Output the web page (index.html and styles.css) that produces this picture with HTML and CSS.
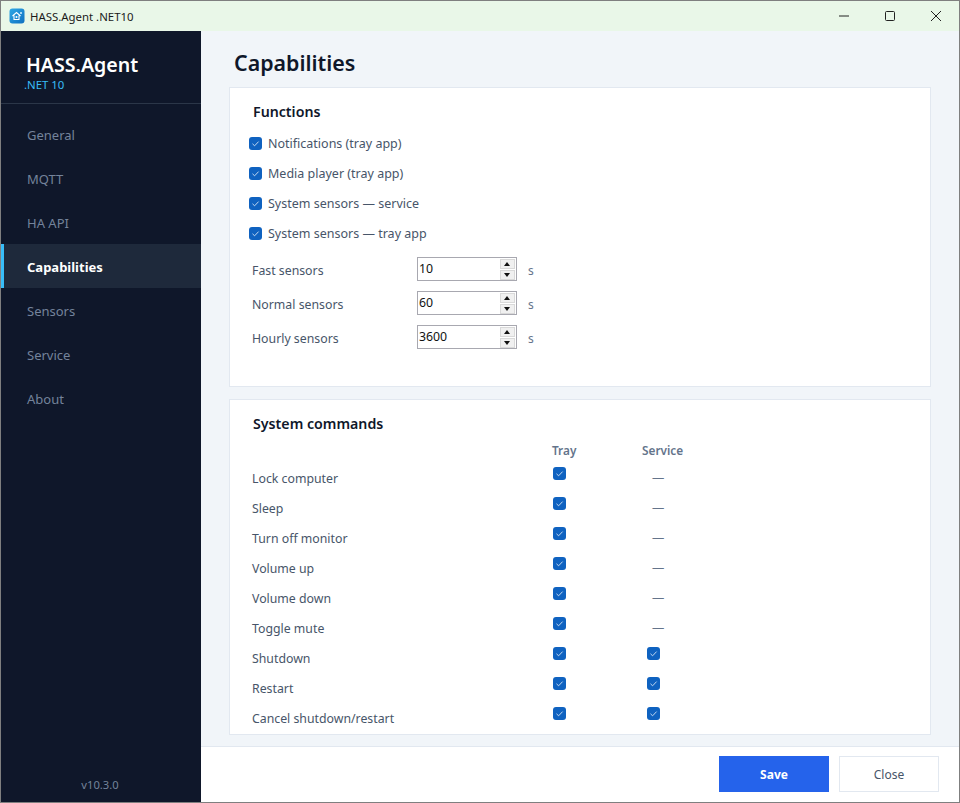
FILE: index.html
```html
<!DOCTYPE html>
<html lang="en">
<head>
    <meta charset="UTF-8">
    <title>HASS.Agent .NET10</title>
    <link rel="stylesheet" href="styles.css">
</head>
<body>
    <div class="window">
        <div class="titlebar">
            <svg class="app-icon" viewBox="0 0 16 16" width="16" height="16">
                <defs>
                    <linearGradient id="icon-bg" x1="0" y1="0" x2="1" y2="1">
                        <stop offset="0" stop-color="#2fa8e6"/>
                        <stop offset="1" stop-color="#0f6fc0"/>
                    </linearGradient>
                </defs>
                <rect width="15" height="15" x="0.5" y="0.5" rx="3" fill="url(#icon-bg)"/>
                <path d="M3.5 8 L7.5 4.5 L11.5 8 M5 7.5 V11.5 H10 V7.5" fill="none" stroke="#fff" stroke-width="1.1"/>
                <circle cx="7.5" cy="9" r="1" fill="#fff"/>
                <circle cx="12" cy="5" r="1" fill="#d6f0ff"/>
            </svg>
            <span class="app-title">HASS.Agent .NET10</span>
            <div class="win-controls">
                <span class="win-btn"><svg width="12" height="12" viewBox="0 0 12 12"><path d="M1 6 H11" stroke="#222" stroke-width="1"/></svg></span>
                <span class="win-btn"><svg width="12" height="12" viewBox="0 0 12 12"><rect x="1.5" y="1.5" width="9" height="9" rx="1" fill="none" stroke="#222" stroke-width="1"/></svg></span>
                <span class="win-btn"><svg width="12" height="12" viewBox="0 0 12 12"><path d="M1 1 L11 11 M11 1 L1 11" stroke="#222" stroke-width="1"/></svg></span>
            </div>
        </div>
        <div class="app">
            <aside class="sidebar">
                <div class="brand">
                    <div class="brand-name">HASS.Agent</div>
                    <div class="brand-sub">.NET 10</div>
                </div>
                <nav class="nav">
                    <div class="nav-item">General</div>
                    <div class="nav-item">MQTT</div>
                    <div class="nav-item">HA API</div>
                    <div class="nav-item active">Capabilities</div>
                    <div class="nav-item">Sensors</div>
                    <div class="nav-item">Service</div>
                    <div class="nav-item">About</div>
                </nav>
                <div class="version">v10.3.0</div>
            </aside>
            <main class="main">
                <div class="content">
                    <h1 class="page-title">Capabilities</h1>
                    <section class="card card-functions">
                        <h2>Functions</h2>
                        <label class="check-row"><span class="check"><svg viewBox="0 0 13 13"><path d="M3.5 6.8 L5.6 8.8 L9.6 4.6"/></svg></span>Notifications (tray app)</label>
                        <label class="check-row"><span class="check"><svg viewBox="0 0 13 13"><path d="M3.5 6.8 L5.6 8.8 L9.6 4.6"/></svg></span>Media player (tray app)</label>
                        <label class="check-row"><span class="check"><svg viewBox="0 0 13 13"><path d="M3.5 6.8 L5.6 8.8 L9.6 4.6"/></svg></span>System sensors — service</label>
                        <label class="check-row"><span class="check"><svg viewBox="0 0 13 13"><path d="M3.5 6.8 L5.6 8.8 L9.6 4.6"/></svg></span>System sensors — tray app</label>
                        <div class="interval-rows">
                            <div class="interval">
                                <span class="interval-label">Fast sensors</span>
                                <div class="spin"><span class="spin-value">10</span><span class="spin-btns"><i class="up"></i><i class="down"></i></span></div>
                                <span class="unit">s</span>
                            </div>
                            <div class="interval">
                                <span class="interval-label">Normal sensors</span>
                                <div class="spin"><span class="spin-value">60</span><span class="spin-btns"><i class="up"></i><i class="down"></i></span></div>
                                <span class="unit">s</span>
                            </div>
                            <div class="interval">
                                <span class="interval-label">Hourly sensors</span>
                                <div class="spin"><span class="spin-value">3600</span><span class="spin-btns"><i class="up"></i><i class="down"></i></span></div>
                                <span class="unit">s</span>
                            </div>
                        </div>
                    </section>
                    <section class="card card-commands">
                        <h2>System commands</h2>
                        <div class="cmd-grid">
                            <div class="cmd-head cmd-tray">Tray</div>
                            <div class="cmd-head cmd-service">Service</div>
                        </div>
                        <div class="cmd-grid cmd-row">
                            <span class="cmd-name">Lock computer</span>
                            <span class="cmd-tray"><span class="check"><svg viewBox="0 0 13 13"><path d="M3.5 6.8 L5.6 8.8 L9.6 4.6"/></svg></span></span>
                            <span class="cmd-service dash">—</span>
                        </div>
                        <div class="cmd-grid cmd-row">
                            <span class="cmd-name">Sleep</span>
                            <span class="cmd-tray"><span class="check"><svg viewBox="0 0 13 13"><path d="M3.5 6.8 L5.6 8.8 L9.6 4.6"/></svg></span></span>
                            <span class="cmd-service dash">—</span>
                        </div>
                        <div class="cmd-grid cmd-row">
                            <span class="cmd-name">Turn off monitor</span>
                            <span class="cmd-tray"><span class="check"><svg viewBox="0 0 13 13"><path d="M3.5 6.8 L5.6 8.8 L9.6 4.6"/></svg></span></span>
                            <span class="cmd-service dash">—</span>
                        </div>
                        <div class="cmd-grid cmd-row">
                            <span class="cmd-name">Volume up</span>
                            <span class="cmd-tray"><span class="check"><svg viewBox="0 0 13 13"><path d="M3.5 6.8 L5.6 8.8 L9.6 4.6"/></svg></span></span>
                            <span class="cmd-service dash">—</span>
                        </div>
                        <div class="cmd-grid cmd-row">
                            <span class="cmd-name">Volume down</span>
                            <span class="cmd-tray"><span class="check"><svg viewBox="0 0 13 13"><path d="M3.5 6.8 L5.6 8.8 L9.6 4.6"/></svg></span></span>
                            <span class="cmd-service dash">—</span>
                        </div>
                        <div class="cmd-grid cmd-row">
                            <span class="cmd-name">Toggle mute</span>
                            <span class="cmd-tray"><span class="check"><svg viewBox="0 0 13 13"><path d="M3.5 6.8 L5.6 8.8 L9.6 4.6"/></svg></span></span>
                            <span class="cmd-service dash">—</span>
                        </div>
                        <div class="cmd-grid cmd-row">
                            <span class="cmd-name">Shutdown</span>
                            <span class="cmd-tray"><span class="check"><svg viewBox="0 0 13 13"><path d="M3.5 6.8 L5.6 8.8 L9.6 4.6"/></svg></span></span>
                            <span class="cmd-service"><span class="check"><svg viewBox="0 0 13 13"><path d="M3.5 6.8 L5.6 8.8 L9.6 4.6"/></svg></span></span>
                        </div>
                        <div class="cmd-grid cmd-row">
                            <span class="cmd-name">Restart</span>
                            <span class="cmd-tray"><span class="check"><svg viewBox="0 0 13 13"><path d="M3.5 6.8 L5.6 8.8 L9.6 4.6"/></svg></span></span>
                            <span class="cmd-service"><span class="check"><svg viewBox="0 0 13 13"><path d="M3.5 6.8 L5.6 8.8 L9.6 4.6"/></svg></span></span>
                        </div>
                        <div class="cmd-grid cmd-row">
                            <span class="cmd-name">Cancel shutdown/restart</span>
                            <span class="cmd-tray"><span class="check"><svg viewBox="0 0 13 13"><path d="M3.5 6.8 L5.6 8.8 L9.6 4.6"/></svg></span></span>
                            <span class="cmd-service"><span class="check"><svg viewBox="0 0 13 13"><path d="M3.5 6.8 L5.6 8.8 L9.6 4.6"/></svg></span></span>
                        </div>
                    </section>
                </div>
                <footer class="footer">
                    <button class="btn btn-save">Save</button>
                    <button class="btn btn-close">Close</button>
                </footer>
            </main>
        </div>
    </div>
</body>
</html>
```

FILE: styles.css
```css
* {
    margin: 0;
    padding: 0;
    box-sizing: border-box;
}

html, body {
    width: 960px;
    height: 803px;
    overflow: hidden;
}

body {
    font-family: "Noto Sans", "Open Sans", sans-serif;
    font-size: 12.3px;
    color: #334155;
}

.window {
    width: 960px;
    height: 803px;
    border: 1px solid #7f7f7f;
    display: flex;
    flex-direction: column;
    background-color: #f1f5f9;
}

/* Title bar */
.titlebar {
    height: 30px;
    flex-shrink: 0;
    display: flex;
    align-items: center;
    padding-left: 8px;
    background-color: #e9f7e8;
}

.app-icon {
    margin-right: 5px;
}

.app-title {
    font-size: 11.4px;
    color: #1a1a1a;
}

.win-controls {
    margin-left: auto;
    display: flex;
}

.win-btn {
    width: 46px;
    height: 30px;
    display: flex;
    align-items: center;
    justify-content: center;
}

.app {
    flex: 1;
    display: flex;
    min-height: 0;
}

/* Sidebar */
.sidebar {
    width: 200px;
    flex-shrink: 0;
    display: flex;
    flex-direction: column;
    background-color: #0f172a;
}

.brand {
    height: 73px;
    padding: 21px 0 0 25px;
    border-bottom: 1px solid #2b3648;
}

.brand-name {
    font-size: 19.6px;
    font-weight: 600;
    line-height: 26px;
    color: #fff;
}

.brand-sub {
    font-size: 11.4px;
    line-height: 13px;
    margin-left: -2px;
    color: #38bdf8;
}

.nav {
    padding-top: 8px;
}

.nav-item {
    height: 44px;
    line-height: 46px;
    padding-left: 26px;
    font-size: 13px;
    color: #74839b;
}

.nav-item.active {
    padding-left: 23px;
    border-left: 3px solid #38bdf8;
    background-color: #1e293b;
    color: #fff;
    font-weight: 700;
}

.version {
    margin-top: auto;
    padding: 0 2px 10px 0;
    text-align: center;
    font-size: 11.2px;
    color: #74839b;
}

/* Main */
.main {
    flex: 1;
    min-width: 0;
    display: flex;
    flex-direction: column;
}

.content {
    flex: 1;
    min-height: 0;
    overflow: hidden;
    padding: 0 28px 0 28px;
}

.page-title {
    font-size: 21.4px;
    font-weight: 600;
    line-height: 30px;
    margin: 17px 0 9px 5px;
    color: #0f172a;
}

.card {
    background-color: white;
    border: 1px solid #e2e8f0;
    margin-bottom: 12px;
    padding-left: 22px;
}

.card h2 {
    font-size: 14.2px;
    font-weight: 600;
    color: #0f172a;
    line-height: 20px;
    margin-left: 1px;
}

.card-functions {
    height: 300px;
    padding-top: 14px;
}

.card-commands {
    height: 336px;
    padding-top: 14px;
}

.check {
    display: inline-block;
    width: 13px;
    height: 13px;
    border-radius: 3px;
    background-color: #0f62c0;
    flex-shrink: 0;
}

.check svg {
    display: block;
    width: 13px;
    height: 13px;
    fill: none;
    stroke: #d5e4f5;
    stroke-width: 0.9;
}

.check-row {
    display: flex;
    align-items: center;
    height: 30px;
    gap: 6px;
    margin-left: -3px;
    font-size: 12.5px;
    color: #475569;
}

.card-functions h2 {
    margin-bottom: 6px;
}

.interval-rows {
    margin-top: 4px;
}

.interval {
    display: flex;
    align-items: center;
    height: 34px;
}

.interval-label {
    width: 165px;
    color: #475569;
    padding-top: 2px;
}

.spin {
    width: 100px;
    height: 24px;
    border: 1px solid #a8a8b0;
    display: flex;
    align-items: center;
    justify-content: space-between;
    padding: 0 1px;
    color: #111;
}

.spin-value {
    padding-bottom: 2px;
}

.spin-btns {
    width: 15px;
    display: flex;
    flex-direction: column;
    gap: 1px;
}

.spin-btns i {
    height: 10px;
    background-color: #f0f0f0;
    border: 1px solid #d9d9d9;
    position: relative;
}

.spin-btns i::after {
    content: '';
    position: absolute;
    left: 3px;
    width: 0;
    height: 0;
    border-left: 3.5px solid transparent;
    border-right: 3.5px solid transparent;
}

.spin-btns .up::after {
    top: 2px;
    border-bottom: 4px solid #111;
}

.spin-btns .down::after {
    top: 2px;
    border-top: 4px solid #111;
}

.unit {
    margin-left: 11px;
    padding-top: 3px;
    font-size: 12px;
    color: #64748b;
}

/* Commands table */
.cmd-grid {
    display: grid;
    grid-template-columns: 299px 94px 60px;
}

.cmd-head {
    font-size: 11.8px;
    font-weight: 600;
    color: #64748b;
    line-height: 18px;
    margin-top: 7px;
    padding-bottom: 4px;
}

.cmd-tray {
    grid-column: 2;
    text-align: left;
}

.cmd-service {
    grid-column: 3;
}

.cmd-head.cmd-tray {
    padding-left: 1px;
}

.cmd-head.cmd-service {
    margin-left: -3px;
}

.cmd-row {
    height: 30px;
    align-items: start;
    color: #475569;
}

.cmd-name {
    line-height: 32px;
}

.cmd-row .check {
    margin-top: 4px;
    margin-left: 2px;
}

.dash {
    line-height: 30px;
    padding-left: 7px;
    color: #64748b;
}

/* Footer */
.footer {
    height: 56px;
    flex-shrink: 0;
    display: flex;
    justify-content: flex-end;
    gap: 10px;
    padding: 9px 20px 0 0;
    background-color: white;
    border-top: 1px solid #e2e8f0;
}

.btn {
    height: 36px;
    font-family: inherit;
    font-size: 12px;
    cursor: pointer;
}

.btn-save {
    width: 110px;
    border: none;
    background-color: #2563eb;
    color: white;
    font-weight: 700;
}

.btn-close {
    width: 100px;
    background-color: white;
    border: 1px solid #e2e8f0;
    color: #475569;
}
```
